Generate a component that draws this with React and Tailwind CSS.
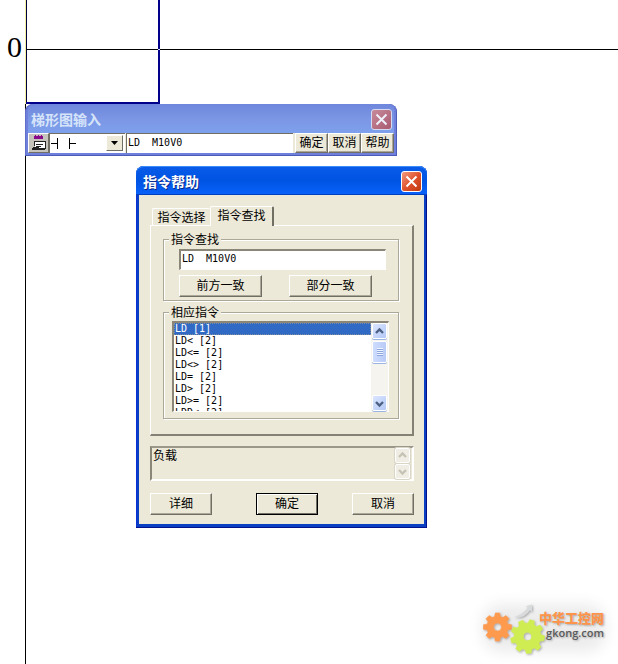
import React, { useState } from 'react';
import clsx from 'clsx';

const INSTRUCTIONS = [
  'LD [1]',
  'LD< [2]',
  'LD<= [2]',
  'LD<> [2]',
  'LD= [2]',
  'LD> [2]',
  'LD>= [2]',
  'LDD< [2]',
];

const TABS = ['指令选择', '指令查找'];

const CHEVRON_UP = 'M2 7 L5.5 3.5 L9 7';
const CHEVRON_DOWN = 'M2 4 L5.5 7.5 L9 4';

const gearPath = (cx, cy, outer, inner, teeth, turn) => {
  const step = (Math.PI * 2) / teeth;
  const point = (radius, angle) =>
    `${(cx + radius * Math.cos(angle)).toFixed(2)} ${(cy + radius * Math.sin(angle)).toFixed(2)}`;
  const points = [];
  for (let i = 0; i < teeth; i += 1) {
    const a = turn + i * step;
    points.push(
      point(inner, a - step * 0.34),
      point(outer, a - step * 0.2),
      point(outer, a + step * 0.2),
      point(inner, a + step * 0.34)
    );
  }
  return `M${points.join('L')}Z`;
};

const PushButton = ({ children, className, isDefault }) => (
  <button
    type="button"
    className={clsx(
      'flex items-center justify-center bg-[#ece9d8] pb-[2px] text-xs leading-3 border',
      isDefault
        ? 'border-black shadow-[inset_1px_1px_0_#fff,inset_-1px_-1px_0_#716f64]'
        : 'border-t-white border-l-white border-r-[#716f64] border-b-[#716f64] shadow-[inset_-1px_-1px_0_#aca899]',
      className
    )}
  >
    {children}
  </button>
);

const CloseButton = ({ faded }) => (
  <button
    type="button"
    aria-label="关闭"
    className={clsx(
      'flex h-[21px] w-[21px] items-center justify-center rounded-[3px] border bg-linear-to-br',
      faded
        ? 'border-[#d5daf0] from-[#c88a9c] to-[#a85a70]'
        : 'border-white from-[#f09a80] via-[#e0522c] to-[#c03a10]'
    )}
  >
    <svg viewBox="0 0 13 13" className="h-[13px] w-[13px]" fill="none" stroke={faded ? '#eef0fa' : '#fff'} strokeWidth="2">
      <path d="M1.500 1.500 L11.500 11.500 M11.500 1.500 L1.500 11.500" />
    </svg>
  </button>
);

const ScrollArrow = ({ d, label, disabled }) => (
  <button
    type="button"
    aria-label={label}
    disabled={disabled}
    className={clsx(
      'flex shrink-0 items-center justify-center rounded-xs border border-white',
      disabled
        ? 'h-[15px] w-[15px] bg-[#f0eee4] shadow-[0_0_0_1px_#d9d6c8]'
        : 'h-[16px] w-[15px] bg-linear-to-br from-[#dbe6fe] to-[#b4c8f6] shadow-[0_1px_0_#9cb4e0]'
    )}
  >
    <svg viewBox="0 0 11 11" className="h-[11px] w-[11px]" fill="none" stroke={disabled ? '#c6c3b6' : '#4d6185'} strokeWidth="2.4">
      <path d={d} />
    </svg>
  </button>
);

const LadderGrid = () => (
  <>
    <svg className="absolute inset-0 h-full w-full" shapeRendering="crispEdges">
      <rect x="25" y="0" width="1" height="100%" fill="#000" />
      <rect x="25" y="0" width="1" height="104" fill="#f4f0a0" />
      <rect x="26" y="0" width="1" height="103" fill="#000040" />
      <rect x="158" y="0" width="2" height="104" fill="#00008b" />
      <rect x="26" y="102" width="134" height="2" fill="#00008b" />
      <rect x="26" y="49" width="100%" height="1" fill="#000" />
      <rect x="158" y="49" width="2" height="1" fill="#d8d8ff" />
    </svg>
    <div className="absolute top-[31px] left-[7px] font-['Liberation_Serif',serif] text-[30px] leading-[32px]">
      0
    </div>
  </>
);

const InputWindow = ({ command, setCommand }) => (
  <section className="absolute top-[104px] left-[25px] w-[372px] rounded-t-lg bg-[#6e80dc] px-[3px] pb-[3px] shadow-[inset_-1px_-1px_0_#4a5cb8,inset_1px_1px_0_#6070c8]">
    <header className="flex h-[29px] items-center justify-between rounded-t-md bg-linear-to-b from-[#6f87dc] via-[#7b96e4] to-[#7ea0ec] pt-px pr-[2px] pl-[3px]">
      <h2 className="text-sm leading-4 font-bold text-[#d6e4fa]">梯形图输入</h2>
      <CloseButton faded />
    </header>
    <div className="flex h-5 bg-[#ece9d8]">
      <button
        type="button"
        aria-label="梯形图"
        className="flex w-[21px] items-center justify-center border border-t-white border-l-white border-r-[#716f64] border-b-[#716f64] bg-[#c6c3bc]"
      >
        <svg viewBox="0 0 16 16" className="h-4 w-4" fill="none" shapeRendering="crispEdges">
          <path d="M4 0h1v1h2v-1h1v1h2v-1h1v1h1v3h-9v-3h1z" fill="#8b0a8b" />
          <path d="M4 6h10v8h-5l-2 -2h-3z" fill="#fff" />
          <path d="M3 6h11v8M5 9h7M5 11h5" stroke="#222" />
          <path d="M3 6v5M2 12h5l2 2" stroke="#222" />
          <path d="M1 14h13" stroke="#222" strokeWidth="2" />
        </svg>
      </button>
      <div className="relative w-[76px] border-t border-l border-[#716f64] bg-white">
        <select aria-label="触点类型" className="h-full w-full appearance-none bg-transparent text-transparent outline-none">
          <option>┤ ├</option>
        </select>
        <svg viewBox="0 0 28 11" className="pointer-events-none absolute top-1 left-px h-[11px] w-[28px]" shapeRendering="crispEdges">
          <path d="M0 5h6v-5h1v11h-1v-5h-6zM18 0h1v5h6v1h-6v5h-1z" fill="#000" />
        </svg>
        <span className="pointer-events-none absolute top-px right-[2px] flex h-4 w-[17px] items-center justify-center border border-t-white border-l-white border-r-[#716f64] border-b-[#716f64] bg-[#ece9d8]">
          <svg viewBox="0 0 7 4" className="h-1 w-[7px]">
            <path d="M0 0h7l-3.500 4z" fill="#000" />
          </svg>
        </span>
      </div>
      <input
        type="text"
        aria-label="指令"
        value={command}
        onChange={(e) => setCommand(e.target.value)}
        className="ml-px min-w-0 flex-1 border-t border-l border-[#716f64] bg-white pb-[2px] pl-px font-['DejaVu_Sans_Mono',monospace] text-[10px] leading-3 outline-none"
      />
      <div className="ml-[2px] flex">
        <PushButton className="w-[33px]">确定</PushButton>
        <PushButton className="w-[33px]">取消</PushButton>
        <PushButton className="w-[33px]">帮助</PushButton>
      </div>
    </div>
  </section>
);

const GroupBox = ({ title, className, children }) => (
  <fieldset className="min-w-0 border border-[#aca899] shadow-[1px_1px_0_#fff,inset_1px_1px_0_#fff]">
    <legend className="ml-[5px] bg-[#ece9d8] px-[2px] text-xs leading-3">{title}</legend>
    <div className={className}>{children}</div>
  </fieldset>
);

const InstructionList = ({ selected, setSelected }) => (
  <div className="flex h-[91px] border-t-2 border-l-2 border-r border-b border-t-[#8a8779] border-l-[#8a8779] border-r-white border-b-white bg-white">
    <ul role="listbox" aria-label="相应指令" className="min-w-0 flex-1 overflow-hidden font-['DejaVu_Sans_Mono',monospace] text-[10px]">
      {INSTRUCTIONS.map((item) => (
        <li
          key={item}
          role="option"
          aria-selected={item === selected}
          onClick={() => setSelected(item)}
          className={clsx(
            'h-3 pl-px leading-3 whitespace-pre',
            item === selected && 'bg-[#316ac5] text-white outline-1 -outline-offset-1 outline-dotted outline-[#7f8fa0]'
          )}
        >
          {item}
        </li>
      ))}
    </ul>
    <div className="flex w-[17px] flex-col items-center bg-[#f5f4ee]">
      <ScrollArrow d={CHEVRON_UP} label="向上滚动" />
      <div className="mt-[2px] flex h-[22px] w-[15px] shrink-0 flex-col items-center justify-center gap-px rounded-xs border border-white bg-linear-to-r from-[#cfdcfd] to-[#b8cbf7] shadow-[0_1px_0_#9cb4e0]">
        <span className="h-px w-[6px] bg-[#8ca6e0] shadow-[0_-1px_0_#eef3ff]" />
        <span className="h-px w-[6px] bg-[#8ca6e0] shadow-[0_-1px_0_#eef3ff]" />
        <span className="h-px w-[6px] bg-[#8ca6e0] shadow-[0_-1px_0_#eef3ff]" />
        <span className="h-px w-[6px] bg-[#8ca6e0] shadow-[0_-1px_0_#eef3ff]" />
      </div>
      <div className="flex-1" />
      <ScrollArrow d={CHEVRON_DOWN} label="向下滚动" />
    </div>
  </div>
);

const HelpDialog = ({ command, setCommand }) => {
  const [tab, setTab] = useState('指令查找');
  const [selected, setSelected] = useState('LD [1]');

  return (
    <section className="absolute top-[166px] left-[136px] w-[291px] rounded-t-lg bg-[#0a3fc4] px-[3px] pb-[4px] shadow-[inset_-1px_-1px_0_#00138c,inset_1px_0_0_#0831d9]">
      <header className="-mx-[3px] flex h-[29px] items-center justify-between rounded-t-lg bg-linear-to-b from-[#0a5be8] via-[#0054e3] to-[#0a62fa] pt-px pr-[5px] pl-[7px] shadow-[inset_0_1px_0_#3c8cf8,inset_0_-1px_0_#0040c0]">
        <h2 className="text-sm leading-4 font-bold text-white [text-shadow:1px_1px_0_#0a2c90]">指令帮助</h2>
        <CloseButton />
      </header>

      <div className="bg-[#ece9d8] pt-[11px] pr-[10px] pb-[9px] pl-[11px]">
        {/* Tabs */}
        <div role="tablist" className="flex items-end pl-[2px]">
          {TABS.map((name) => (
            <button
              key={name}
              type="button"
              role="tab"
              aria-selected={name === tab}
              onClick={() => setTab(name)}
              className={clsx(
                'rounded-t-xs border-t border-l border-white bg-[#ece9d8] text-xs leading-3',
                name === tab
                  ? 'relative -mb-px h-5 w-[64px] border-r-2 border-r-[#716f64] pb-1'
                  : 'h-[17px] w-[58px]'
              )}
            >
              {name}
            </button>
          ))}
        </div>

        {/* Search page */}
        <div className="flex flex-col gap-[5px] border-t border-l border-r-2 border-b-2 border-t-white border-l-white border-r-[#858275] border-b-[#858275] pt-[7px] pr-[13px] pb-[15px] pl-[12px]">
          <GroupBox title="指令查找" className="pt-1 pr-[12px] pb-[3px] pl-[15px]">
            <input
              type="text"
              aria-label="指令查找"
              value={command}
              onChange={(e) => setCommand(e.target.value)}
              className="block h-[21px] w-full border-t-2 border-l-2 border-r border-b border-t-[#8a8779] border-l-[#8a8779] border-r-white border-b-white bg-white pb-[3px] pl-px font-['DejaVu_Sans_Mono',monospace] text-[10px] leading-3 outline-none"
            />
            <div className="mt-[5px] flex gap-[27px]">
              <PushButton className="h-[22px] w-[83px]">前方一致</PushButton>
              <PushButton className="h-[22px] w-[83px]">部分一致</PushButton>
            </div>
          </GroupBox>

          <GroupBox title="相应指令" className="pt-[3px] pr-[9px] pb-[6px] pl-2">
            <InstructionList selected={selected} setSelected={setSelected} />
          </GroupBox>
        </div>

        {/* Description */}
        <div className="mt-[10px] flex h-[35px] border-2 border-t-[#9a9789] border-l-[#8a8779] border-r-white border-b-white">
          <textarea
            readOnly
            aria-label="说明"
            value="负载"
            className="block h-full min-w-0 flex-1 resize-none overflow-hidden bg-transparent px-px pt-px text-xs leading-3 outline-none"
          />
          <div className="flex w-[17px] flex-col justify-between">
            <ScrollArrow d={CHEVRON_UP} label="说明向上" disabled />
            <ScrollArrow d={CHEVRON_DOWN} label="说明向下" disabled />
          </div>
        </div>

        <div className="mt-3 flex">
          <PushButton className="h-[22px] w-[62px]">详细</PushButton>
          <PushButton className="ml-11 h-[22px] w-[62px]" isDefault>确定</PushButton>
          <PushButton className="ml-auto h-[22px] w-[62px]">取消</PushButton>
        </div>
      </div>
    </section>
  );
};

const SiteLogo = () => (
  <a href="#gkong" className="absolute right-0 bottom-0 flex h-20 w-[150px] justify-end pr-[14px]">
    <svg viewBox="0 0 150 80" className="absolute inset-0 h-20 w-[150px]">
      <defs>
        <filter id="haze" x="-20%" y="-30%" width="140%" height="160%">
          <feGaussianBlur stdDeviation="7" />
        </filter>
        <filter id="drop" x="-20%" y="-20%" width="150%" height="150%">
          <feDropShadow dx="1" dy="1" stdDeviation="1" floodColor="#777" floodOpacity="0.6" />
        </filter>
      </defs>
      <rect x="14" y="20" width="124" height="48" rx="20" fill="#ececec" filter="url(#haze)" />
      <g filter="url(#drop)">
        <path d="M46 33 Q54 31 60 23.500 L57.500 22.500 L64 20.500 L64 28 L62 26 Q56 35 46 33 Z" fill="#d8dadb" />
        <path
          d={`${gearPath(29.5, 43, 14.2, 10.8, 8, 0)}M33.500 43a4 4 0 1 0 -8 0a4 4 0 1 0 8 0Z`}
          fill="#fd9a4e"
          stroke="#fd9a4e"
          strokeWidth="0.6"
          strokeLinejoin="round"
          fillRule="evenodd"
        />
        <path
          d={`${gearPath(59.5, 52.5, 17, 13.4, 9, 0.1)}M63.700 52.500a4.200 4.200 0 1 0 -8.400 0a4.200 4.200 0 1 0 8.400 0Z`}
          fill="#cfec52"
          stroke="#cfec52"
          strokeWidth="0.6"
          strokeLinejoin="round"
          fillRule="evenodd"
        />
      </g>
    </svg>
    <div className="relative flex flex-col items-end pt-[26px] [text-shadow:1px_1px_2px_#aaa]">
      <span className="text-[13px] leading-4 font-black text-[#fd944a]">中华工控网</span>
      <span className="font-['Open_Sans',sans-serif] text-[11px] leading-[13px] font-semibold text-[#5a5a5a]">gkong.com</span>
    </div>
  </a>
);

const App = () => {
  const [command, setCommand] = useState('LD  M10V0');

  return (
    <main className="relative min-h-screen overflow-hidden bg-white font-['Noto_Sans_CJK_SC',sans-serif] text-black">
      <LadderGrid />
      <InputWindow command={command} setCommand={setCommand} />
      <HelpDialog command={command} setCommand={setCommand} />
      <SiteLogo />
    </main>
  );
};

export default App;
